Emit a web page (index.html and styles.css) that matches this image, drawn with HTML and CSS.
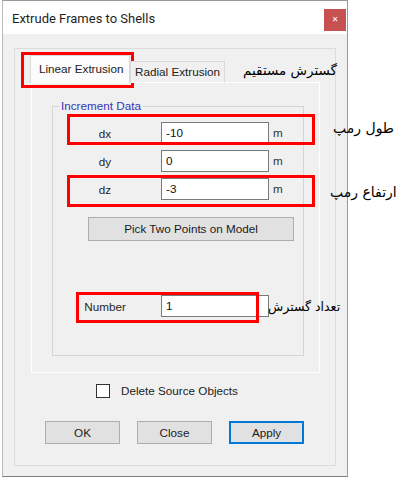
FILE: index.html
```html
<!DOCTYPE html>
<html lang="en">
<head>
<meta charset="utf-8">
<title>Extrude Frames to Shells</title>
<link rel="stylesheet" href="styles.css">
</head>
<body>
<div class="window">
  <div class="titlebar">
    <span class="title">Extrude Frames to Shells</span>
    <button class="close" aria-label="Close">&#x2715;</button>
  </div>
  <div class="client">
    <div class="frame">
      <div class="tabstrip">
        <div class="tab selected">Linear Extrusion</div>
        <div class="tab">Radial Extrusion</div>
      </div>
      <div class="panel">
        <fieldset class="group">
          <legend>Increment Data</legend>
          <div class="row first">
            <span class="lbl">dx</span>
            <span class="field">-10</span>
            <span class="unit">m</span>
          </div>
          <div class="row">
            <span class="lbl">dy</span>
            <span class="field">0</span>
            <span class="unit">m</span>
          </div>
          <div class="row">
            <span class="lbl">dz</span>
            <span class="field">-3</span>
            <span class="unit">m</span>
          </div>
          <div class="btn pick">Pick Two Points on Model</div>
          <div class="row number">
            <span class="lbl">Number</span>
            <span class="field">1</span>
          </div>
        </fieldset>
      </div>
      <div class="check-row">
        <span class="checkbox"></span>
        <span class="check-label">Delete Source Objects</span>
      </div>
      <div class="buttons">
        <div class="btn">OK</div>
        <div class="btn">Close</div>
        <div class="btn default">Apply</div>
      </div>
    </div>
  </div>
</div>

<div class="notes">
  <div class="mark mark-tab"></div>
  <div class="mark mark-dx"></div>
  <div class="mark mark-dz"></div>
  <div class="mark mark-num"></div>
  <div class="note note-tab" dir="rtl">گسترش مستقیم</div>
  <div class="note note-dx" dir="rtl">طول رمپ</div>
  <div class="note note-dz" dir="rtl">ارتفاع رمپ</div>
  <div class="note note-num" dir="rtl">تعداد گسترش</div>
</div>
</body>
</html>
```
FILE: styles.css
```css
html, body {
  margin: 0;
  padding: 0;
  background: #ffffff;
}

body {
  font-family: "Liberation Sans", Arial, sans-serif;
  font-size: 11.7px;
  color: #222222;
  width: 405px;
  height: 480px;
  overflow: hidden;
}

.window {
  margin-left: 2px;
  width: 346px;
  box-sizing: border-box;
  border: 1px solid #9a9a9a;
  border-left-color: #b9b9b9;
  border-bottom-color: #7d7d7d;
}

.titlebar {
  height: 33px;
  background: #ffffff;
  display: flex;
  justify-content: space-between;
  align-items: flex-start;
}

.title {
  margin: 10px 0 0 9px;
  font-family: Roboto, "Liberation Sans", sans-serif;
  font-size: 13px;
  line-height: 16px;
  color: #1f1f1f;
}

.close {
  margin: 8px 1px 0 0;
  width: 22px;
  height: 22px;
  padding: 0;
  border: none;
  background: #c75050;
  color: #ffffff;
  font-size: 8px;
  font-weight: bold;
  line-height: 22px;
  font-family: "DejaVu Sans", sans-serif;
}

.client {
  background: #f0f0f0;
  height: 442px;
  box-sizing: border-box;
  padding: 14px 0 0 11px;
}

.frame {
  width: 322px;
  height: 418px;
  box-sizing: border-box;
  border: 1px solid #dcdcdc;
  padding-top: 6px;
}

.tabstrip {
  display: flex;
  align-items: flex-end;
  margin-left: 15px;
  margin-bottom: -1px;
  position: relative;
  z-index: 1;
}

.tab {
  height: 22px;
  box-sizing: border-box;
  padding: 0 4px;
  border: 1px solid #d9d9d9;
  border-bottom-color: #ffffff;
  background: #f0f0f0;
  line-height: 20px;
  color: #222222;
}

.tab.selected {
  width: 100px;
  height: 28px;
  padding: 0 0 0 8px;
  background: #fcfcfc;
  border-bottom: none;
  line-height: 26px;
}

.panel {
  margin-left: 16px;
  width: 289px;
  height: 291px;
  box-sizing: border-box;
  border: 1px solid #ffffff;
  padding-top: 16px;
}

.group {
  margin: 0 0 0 20px;
  padding: 0;
  width: 252px;
  height: 257px;
  box-sizing: border-box;
  border: 1px solid #d5d5d5;
  min-width: 0;
}

.group legend {
  margin-left: 6px;
  padding: 0 2px;
  line-height: 14px;
  color: #3535b8;
}

.row {
  display: flex;
  align-items: center;
  height: 22px;
  margin-top: 6px;
}

.row.first {
  margin-top: 9px;
}

.row.number {
  margin-top: 54px;
}

.lbl {
  width: 104px;
  text-align: center;
  color: #262626;
}

.field {
  margin-left: 4px;
  width: 108px;
  height: 22px;
  box-sizing: border-box;
  border: 1px solid #7a7a7a;
  background: #ffffff;
  padding-left: 4px;
  line-height: 20px;
  color: #111111;
}

.unit {
  margin-left: 4px;
  margin-top: -2px;
  color: #333333;
}

.btn {
  width: 75px;
  height: 23px;
  box-sizing: border-box;
  border: 1px solid #adadad;
  background: #e1e1e1;
  text-align: center;
  line-height: 21px;
  color: #1a1a1a;
}

.btn.pick {
  margin: 17px 0 0 35px;
  width: 206px;
  height: 24px;
  line-height: 22px;
}

.check-row {
  display: flex;
  align-items: center;
  margin: 11px 0 0 81px;
  height: 14px;
  line-height: 14px;
}

.checkbox {
  width: 14px;
  height: 14px;
  box-sizing: border-box;
  border: 1px solid #333333;
  background: #ffffff;
}

.check-label {
  margin-left: 11px;
}

.buttons {
  display: flex;
  margin: 23px 0 0 30px;
  gap: 17px;
}

.btn.default {
  border: 2px solid #0078d7;
  line-height: 19px;
}

/* annotation layer drawn over the screenshot */
.notes {
  position: absolute;
  left: 0;
  top: 0;
  width: 405px;
  height: 480px;
  pointer-events: none;
}

.mark {
  position: absolute;
  box-sizing: border-box;
  border: 3px solid #ff0000;
}

.mark-tab { left: 21px; top: 52px; width: 113px; height: 36px; }
.mark-dx  { left: 67px; top: 114px; width: 248px; height: 31px; }
.mark-dz  { left: 67px; top: 175px; width: 248px; height: 32px; }
.mark-num { left: 76px; top: 292px; width: 183px; height: 31px; }

.note {
  position: absolute;
  font-family: "DejaVu Sans", sans-serif;
  font-size: 14px;
  line-height: 20px;
  color: #000000;
  white-space: nowrap;
}

.note-tab { left: 243px; top: 60px; font-size: 13.5px; }
.note-dx  { left: 333px; top: 118px; }
.note-dz  { left: 330px; top: 182px; }
.note-num { left: 268px; top: 297px; font-size: 12.5px; }
```
